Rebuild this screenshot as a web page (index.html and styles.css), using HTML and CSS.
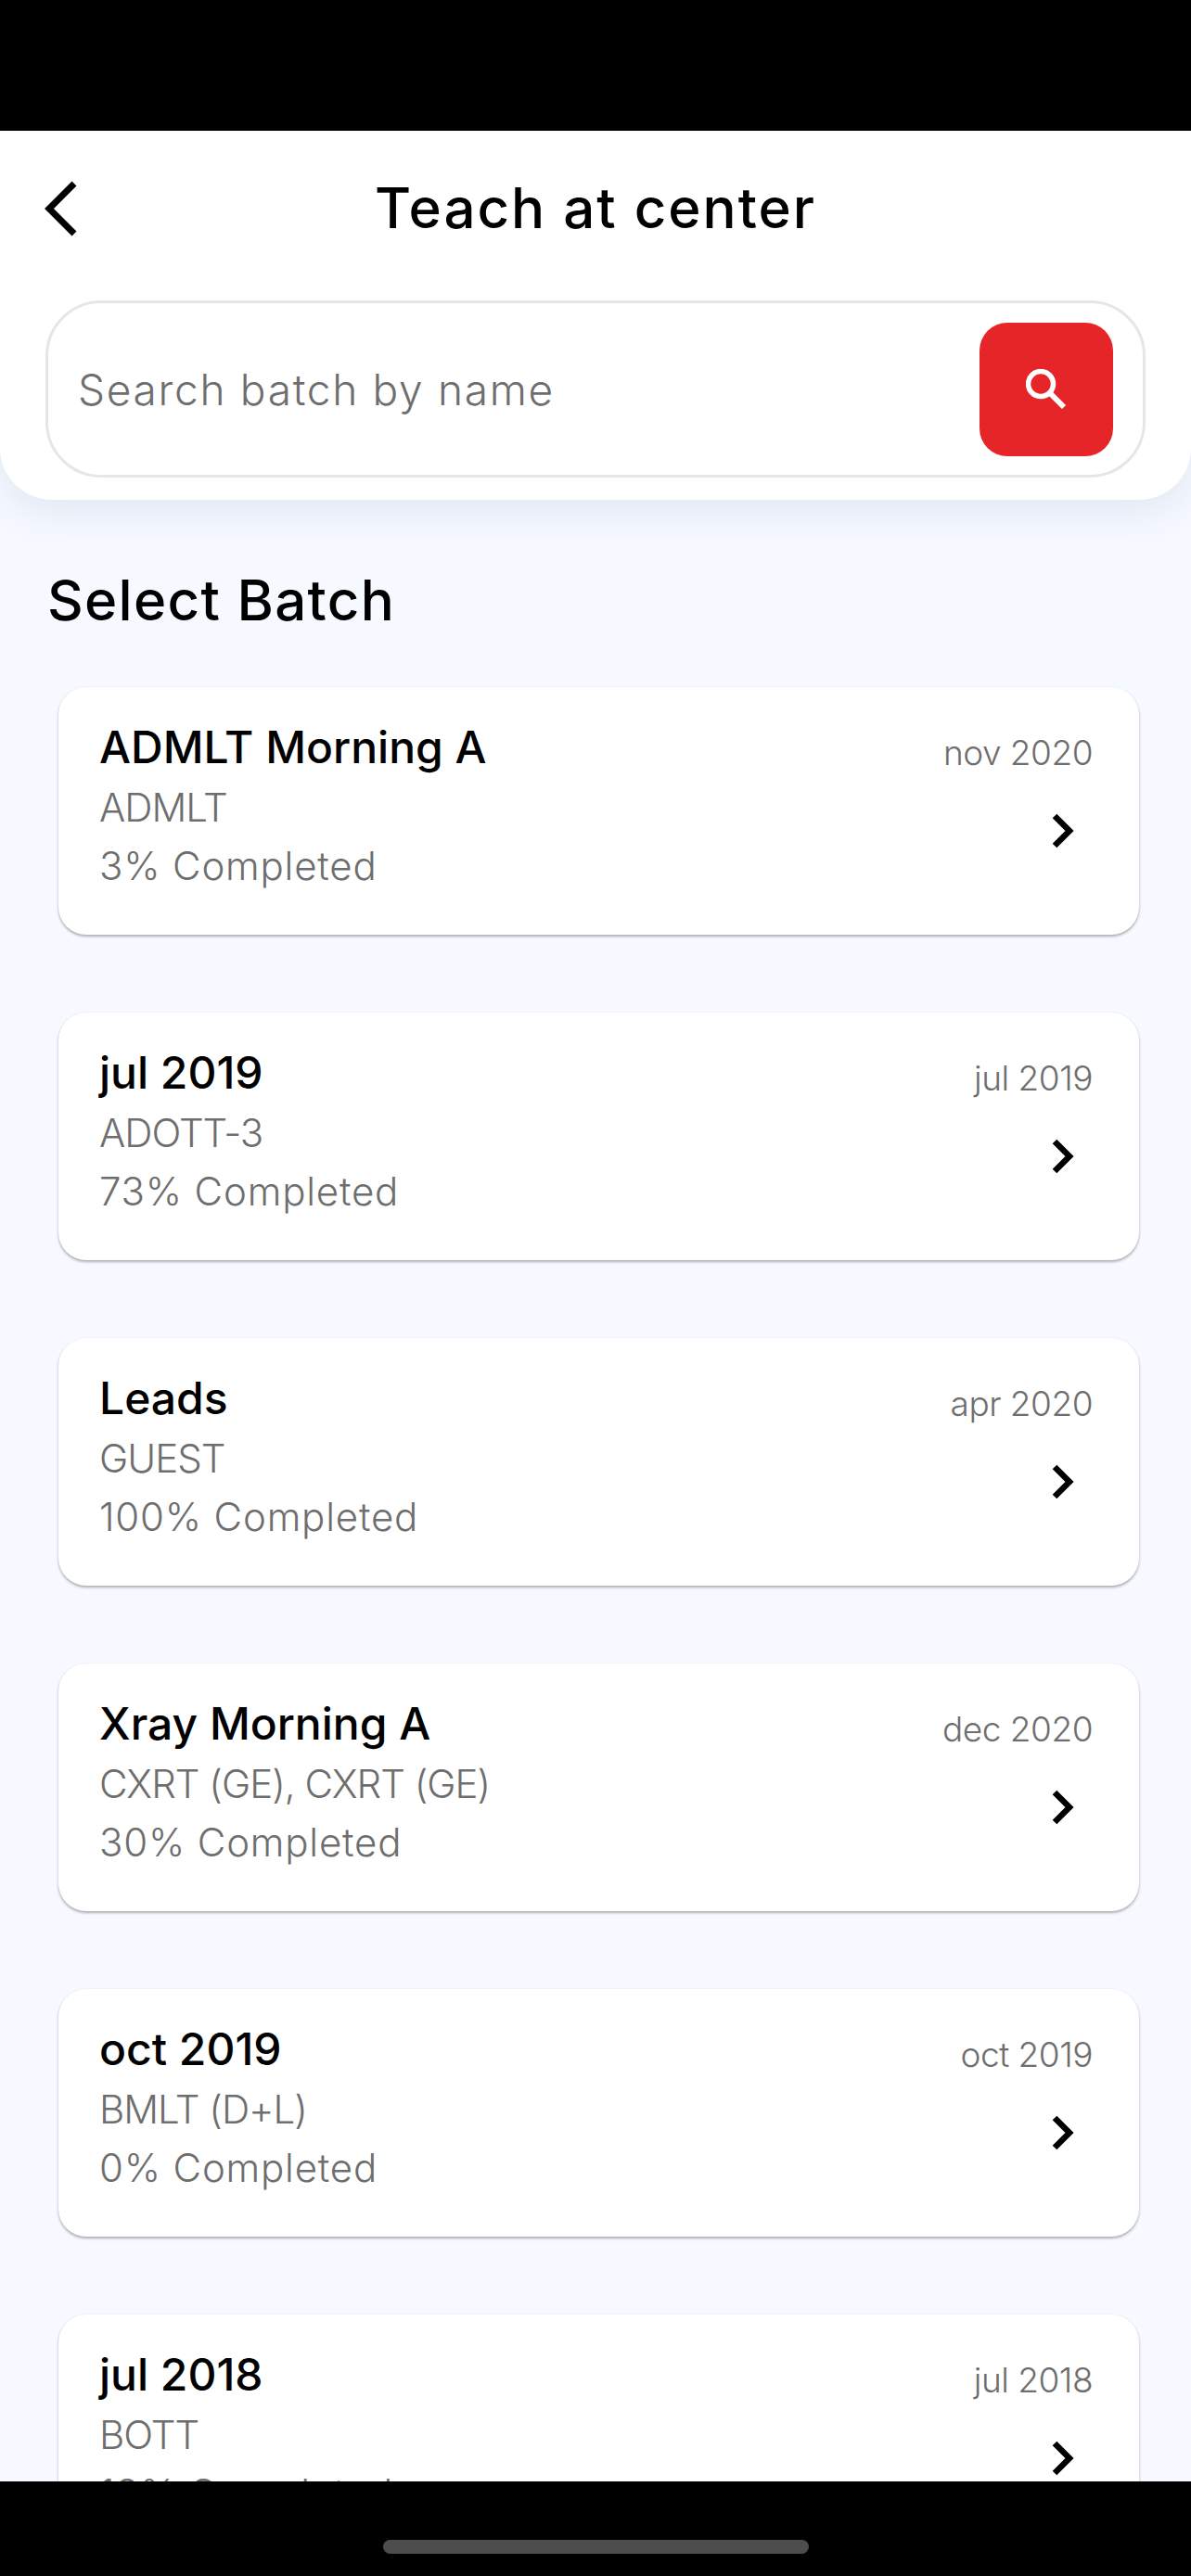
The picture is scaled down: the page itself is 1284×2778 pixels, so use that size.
FILE: index.html
```html
<!DOCTYPE html>
<html lang="en">
<head>
<meta charset="utf-8">
<title>Teach at center</title>
<link rel="stylesheet" href="styles.css">
</head>
<body>
<svg class="sprite" width="0" height="0" aria-hidden="true">
  <symbol id="chev" viewBox="0 0 24 38"><path d="M3 3 L19 19 L3 35" fill="none" stroke="#000" stroke-width="6.5"/></symbol>
</svg>
<div class="status"></div>
<main class="screen">
  <header class="top">
    <div class="bar">
      <svg class="back" viewBox="0 0 36 60"><path d="M32 3 L5 30 L32 57" fill="none" stroke="#000" stroke-width="7"/></svg>
      <h1 class="title">Teach at center</h1>
    </div>
    <div class="search">
      <span class="placeholder">Search batch by name</span>
      <button class="go"><svg class="mag" viewBox="0 0 44 44"><circle cx="16" cy="16" r="13.5" fill="none" stroke="#fff" stroke-width="5.5"/><path d="M26 26 L41 41" stroke="#fff" stroke-width="6" fill="none"/></svg></button>
    </div>
  </header>
  <h2 class="section">Select Batch</h2>
  <div class="list">
    <article class="card"><div class="info"><div class="name">ADMLT Morning A</div><div class="code">ADMLT</div><div class="progress">3% Completed</div></div><div class="side"><span class="date">nov 2020</span><svg class="chev"><use href="#chev"/></svg></div></article>
    <article class="card"><div class="info"><div class="name">jul 2019</div><div class="code">ADOTT-3</div><div class="progress">73% Completed</div></div><div class="side"><span class="date">jul 2019</span><svg class="chev"><use href="#chev"/></svg></div></article>
    <article class="card"><div class="info"><div class="name">Leads</div><div class="code">GUEST</div><div class="progress">100% Completed</div></div><div class="side"><span class="date">apr 2020</span><svg class="chev"><use href="#chev"/></svg></div></article>
    <article class="card"><div class="info"><div class="name">Xray Morning A</div><div class="code">CXRT (GE), CXRT (GE)</div><div class="progress">30% Completed</div></div><div class="side"><span class="date">dec 2020</span><svg class="chev"><use href="#chev"/></svg></div></article>
    <article class="card"><div class="info"><div class="name">oct 2019</div><div class="code">BMLT (D+L)</div><div class="progress">0% Completed</div></div><div class="side"><span class="date">oct 2019</span><svg class="chev"><use href="#chev"/></svg></div></article>
    <article class="card"><div class="info"><div class="name">jul 2018</div><div class="code">BOTT</div><div class="progress">18% Completed</div></div><div class="side"><span class="date">jul 2018</span><svg class="chev"><use href="#chev"/></svg></div></article>
  </div>
</main>
<footer class="nav"><div class="home"></div></footer>
</body>
</html>
```
FILE: styles.css
```css
* { box-sizing: border-box; }
html, body { margin: 0; height: 100%; }
body {
  width: 1284px; height: 2778px; overflow: hidden;
  display: flex; flex-direction: column;
  background: #000;
  font-family: Inter, "Noto Sans", sans-serif;
}
.sprite { position: absolute; }
.status { height: 141px; flex: none; background: #000; }
.screen { flex: 1; min-height: 0; overflow: hidden; background: #f6f9ff; }
.top {
  height: 398px; background: #fff;
  border-radius: 0 0 56px 56px;
  box-shadow: 0 14px 40px rgba(60, 80, 140, .10);
  padding: 0 49px;
  display: flex; flex-direction: column;
}
.bar { height: 183px; display: flex; align-items: center; justify-content: center; position: relative; padding-bottom: 17px; }
.back { position: absolute; left: -1px; top: 54px; width: 36px; height: 60px; }
.title { margin: 0; font-size: 60px; font-weight: 500; line-height: 70px; letter-spacing: 2px; color: #000; }
.search {
  height: 191px; border: 3px solid #e6e6e6; border-radius: 60px;
  display: flex; align-items: center; justify-content: space-between;
  padding: 0 32px 0 32px;
}
.placeholder { font-size: 46px; font-weight: 300; color: #6e6e6e; letter-spacing: 1.7px; }
.go { width: 144px; height: 144px; border: 0; padding: 0; border-radius: 30px; background: #e52528; display: flex; align-items: center; justify-content: center; }
.mag { width: 44px; height: 44px; }
.section { margin: 0; padding: 73px 0 0 51px; font-size: 60px; line-height: 70px; font-weight: 500; letter-spacing: 1.3px; color: #000; height: 202px; }
.list { display: flex; flex-direction: column; gap: 84px; padding: 0 56px 0 63px; }
.card {
  flex: none; height: 267px; background: #fff; border-radius: 30px;
  box-shadow: 0 2px 3px rgba(0, 0, 0, .3), 0 0 2px rgba(0, 0, 0, .06);
  padding: 31px 50px 0 44px;
  display: flex; justify-content: space-between;
}
.name { font-size: 48px; font-weight: 500; line-height: 67px; color: #000; }
.code { font-size: 42px; font-weight: 300; line-height: 63px; letter-spacing: -1px; color: #6e6e6e; }
.progress { font-size: 42px; font-weight: 300; line-height: 63px; letter-spacing: .8px; color: #6e6e6e; }
.side { display: flex; flex-direction: column; align-items: flex-end; }
.date { font-size: 37px; font-weight: 300; line-height: 48px; letter-spacing: -.5px; color: #6e6e6e; margin-top: 16px; }
.chev { width: 24px; height: 38px; margin: 41px 20px 0 0; }
.nav { height: 102px; flex: none; background: #000; display: flex; justify-content: center; padding-top: 63px; }
.home { width: 459px; height: 15px; border-radius: 8px; background: #4d4d4d; }
```
